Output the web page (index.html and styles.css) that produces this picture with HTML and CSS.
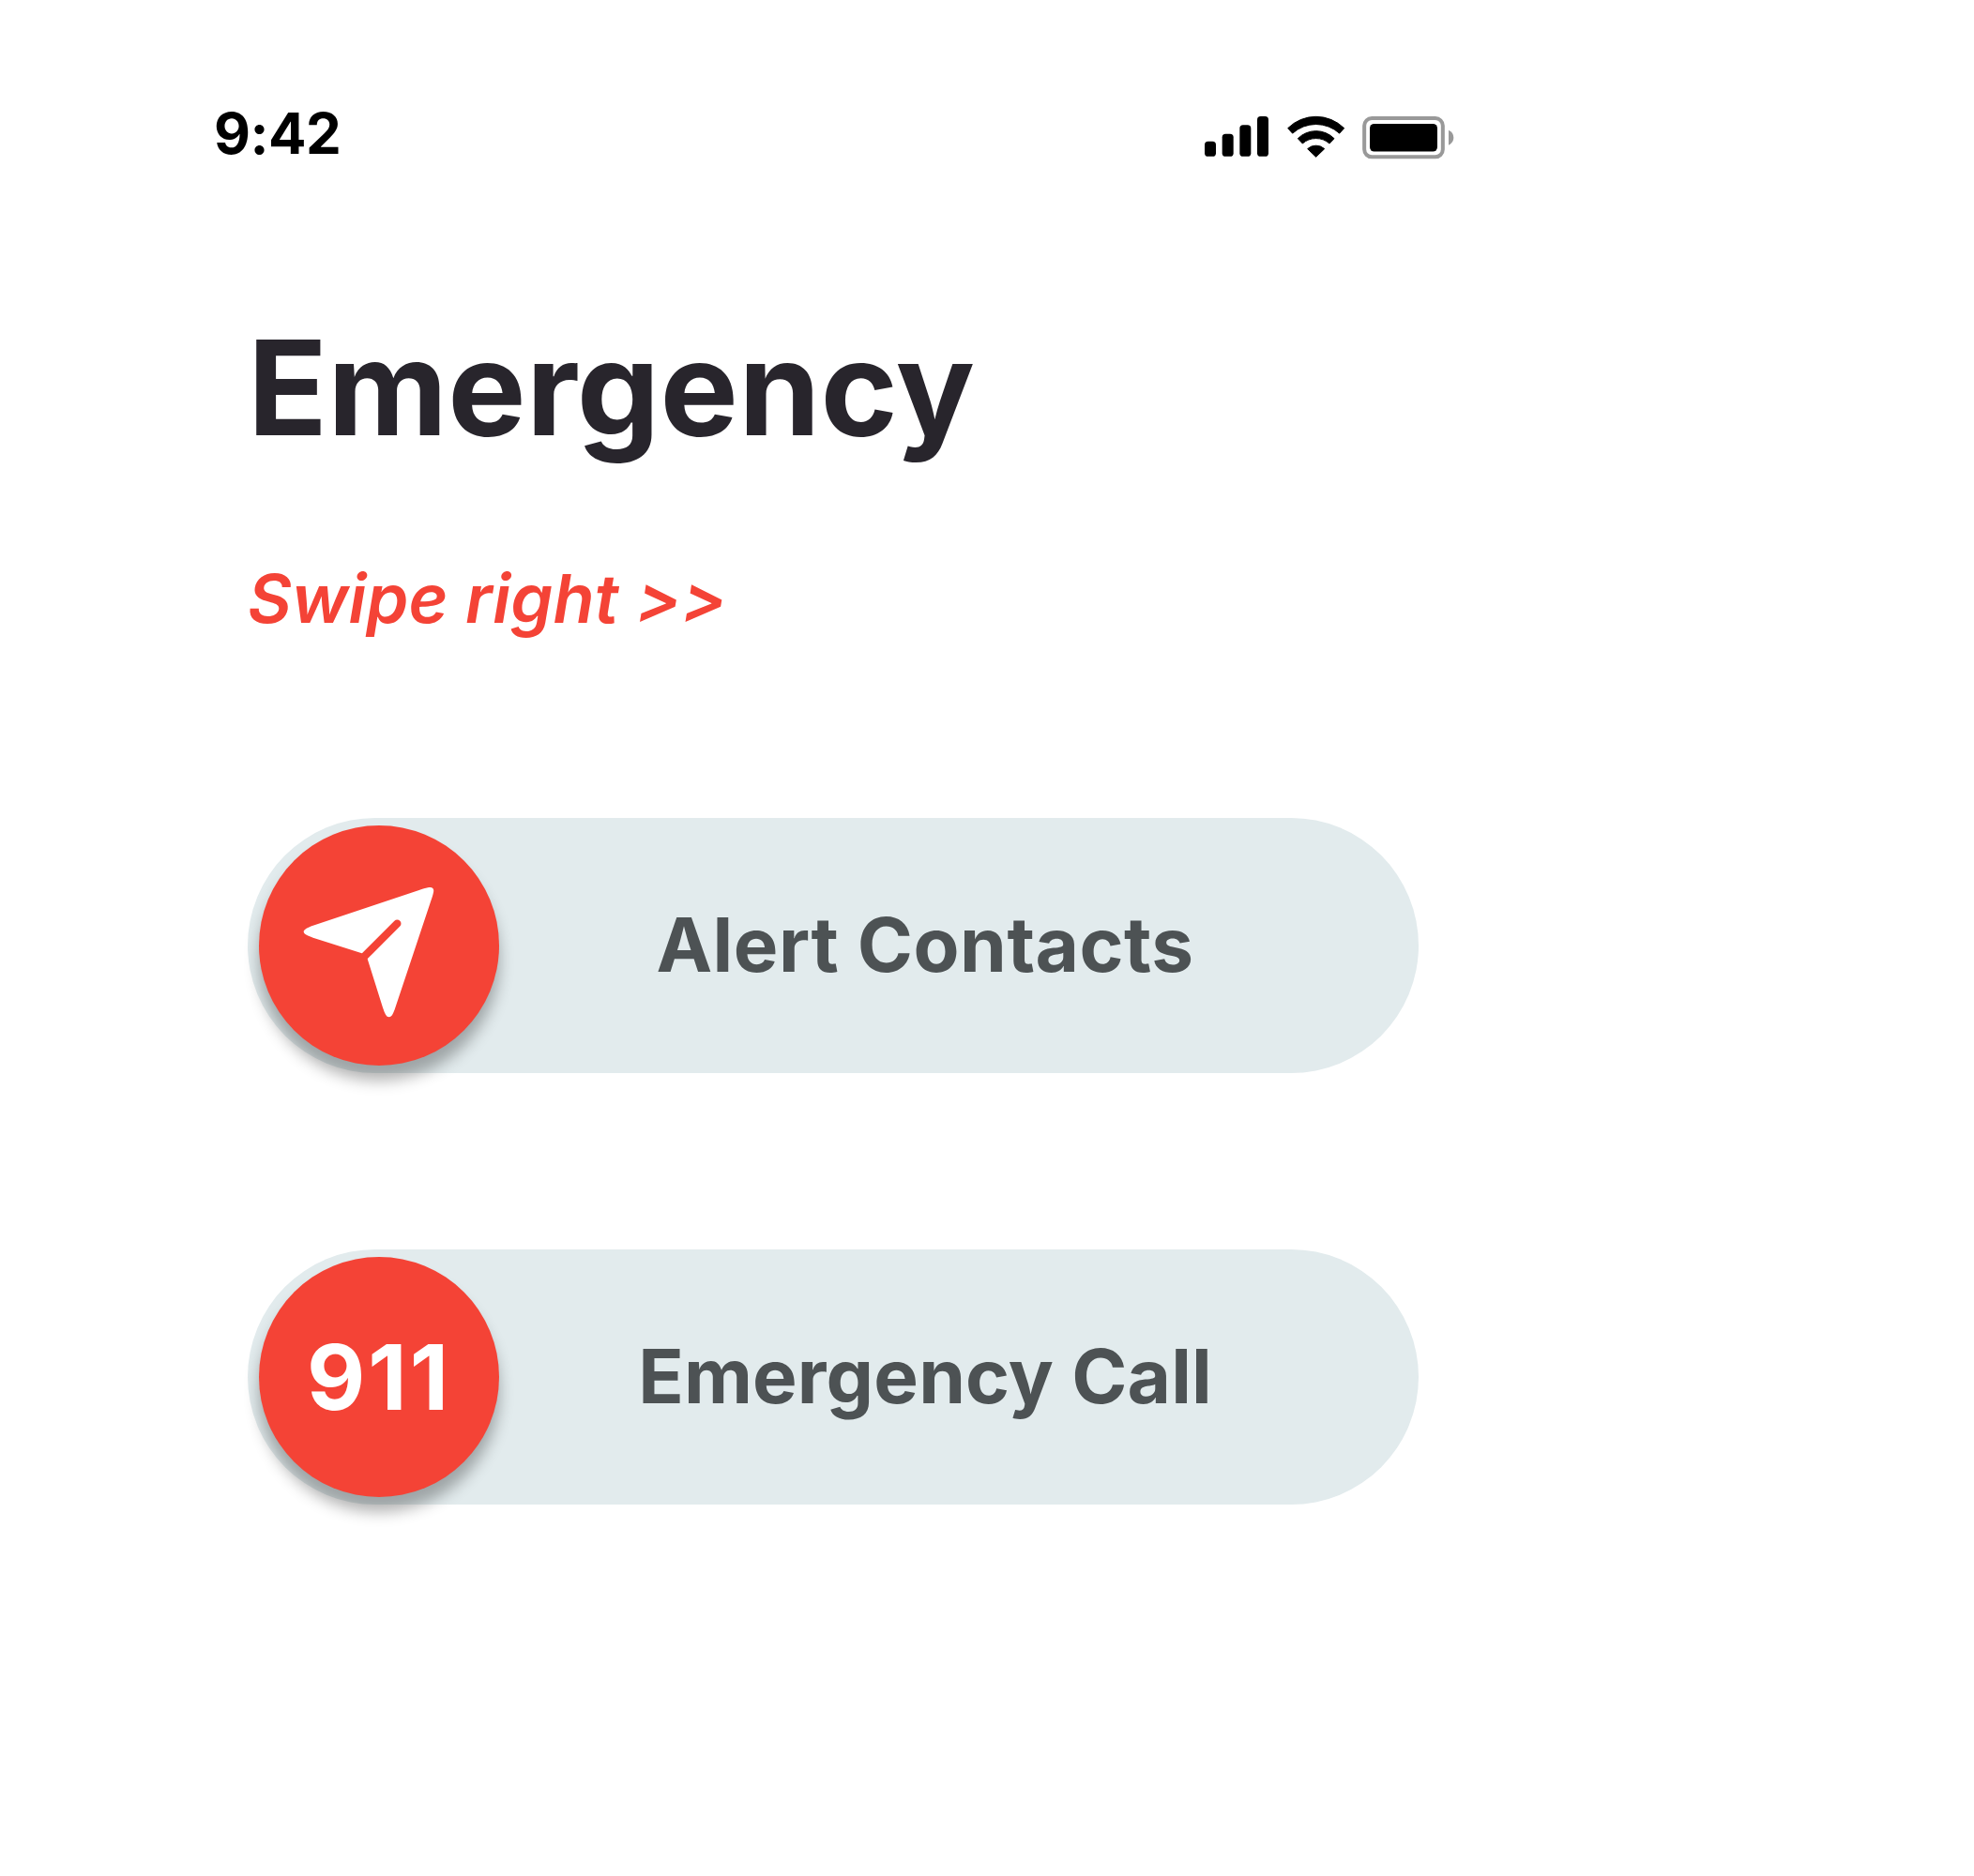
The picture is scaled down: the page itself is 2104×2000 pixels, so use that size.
FILE: index.html
```html
<!DOCTYPE html>
<html lang="en">
<head>
<meta charset="utf-8">
<title>Emergency</title>
<link rel="stylesheet" href="styles.css">
</head>
<body>
<main class="screen">
  <header class="status-bar">
    <span class="time">9:42</span>
    <svg class="status-icons" viewBox="42 39 798 144" aria-hidden="true">
      <rect x="42" y="122" width="36" height="48.500" rx="11"/>
      <rect x="98" y="98" width="36" height="72.500" rx="11"/>
      <rect x="154" y="70" width="36" height="100.500" rx="11"/>
      <rect x="210" y="42" width="36" height="128.500" rx="11"/>
      <g class="wifi">
        <path d="M308 80A128 128 0 0 1 488 80L473 96.500A111.500 111.500 0 0 0 323 96.500Z"/>
        <path d="M340 113A82 82 0 0 1 456 113L441 129A65 65 0 0 0 355 129Z"/>
        <path d="M371 146A40 40 0 0 1 425 146L398 172Z"/>
      </g>
      <rect class="battery-frame" x="552.500" y="48" width="251" height="124" rx="24"/>
      <rect x="570" y="66" width="216" height="88.500" rx="14"/>
      <path class="battery-cap" d="M822 86Q838 94 838 110T822 134Z"/>
    </svg>
  </header>
  <h1 class="title">Emergency</h1>
  <p class="hint">Swipe right &gt;&gt;</p>
  <div class="actions">
    <div class="slider">
      <span class="knob">
        <svg class="plane" viewBox="78 60 768 768" aria-hidden="true">
          <path class="plane-body" d="M618 259C632 255 639 261 636 274C634 284 632 290 628 301L514 643C508 661 503 673 494 673C485 673 481 663 474 643L425 487L407 469L251 419C232 412 221 407 221 400C221 393 232 387 251 380L590 267C602 263 610 261 618 259Z"/>
          <path class="plane-fold" d="M520 374L412 482"/>
        </svg>
      </span>
      <span class="label label-alert">Alert Contacts</span>
    </div>
    <div class="slider">
      <span class="knob">911</span>
      <span class="label">Emergency Call</span>
    </div>
  </div>
</main>
</body>
</html>
```
FILE: styles.css
```css
* { box-sizing: border-box; }
body {
  margin: 0;
  background: #fff;
  font-family: Inter, "Liberation Sans", sans-serif;
}
.screen {
  width: 1776px;
  min-height: 2000px;
  padding: 112px 226px 0 228px;
}
.status-bar {
  display: flex;
  justify-content: space-between;
  align-items: flex-start;
  height: 60px;
}
.time {
  font-size: 60px;
  line-height: 60px;
  font-weight: 700;
  letter-spacing: -0.5px;
}
.status-icons {
  width: 266px;
  height: 48px;
  margin-top: 11px;
}
.wifi {
  stroke: #000;
  stroke-width: 3;
  stroke-linejoin: round;
}
.battery-frame {
  fill: none;
  stroke: #999;
  stroke-width: 12;
}
.battery-cap { fill: #999; }
.title {
  margin: 171px 0 0 36px;
  color: #28252c;
  font-size: 140px;
  line-height: 140px;
  font-weight: 700;
  letter-spacing: 0.25px;
}
.hint {
  margin: 119px 0 0 36px;
  color: #f44336;
  font-size: 72px;
  line-height: 72px;
  font-weight: 600;
  font-style: italic;
  letter-spacing: 0.1px;
}
.actions {
  display: flex;
  flex-direction: column;
  gap: 188px;
  width: 1248px;
  margin: 198px 0 0 36px;
}
.slider {
  display: flex;
  align-items: center;
  height: 272px;
  padding: 0 72px 0 12px;
  border-radius: 136px;
  background: #e2ebed;
}
.knob {
  display: flex;
  align-items: center;
  justify-content: center;
  flex: none;
  width: 256px;
  height: 256px;
  border-radius: 50%;
  background: #f44336;
  box-shadow: 0 16px 16px rgba(0, 0, 0, .3);
  color: #fff;
  font-size: 96px;
  line-height: 96px;
  font-weight: 700;
  letter-spacing: 3px;
}
.plane {
  width: 256px;
  height: 256px;
}
.plane-body { fill: #fff; }
.plane-fold {
  fill: none;
  stroke: #f44336;
  stroke-width: 25;
  stroke-linecap: round;
}
.label {
  flex: 1;
  padding-bottom: 2px;
  color: #4d5254;
  font-size: 80px;
  line-height: 80px;
  font-weight: 700;
  letter-spacing: 0.15px;
  text-align: center;
}
.label-alert { letter-spacing: 0.5px; }
```
